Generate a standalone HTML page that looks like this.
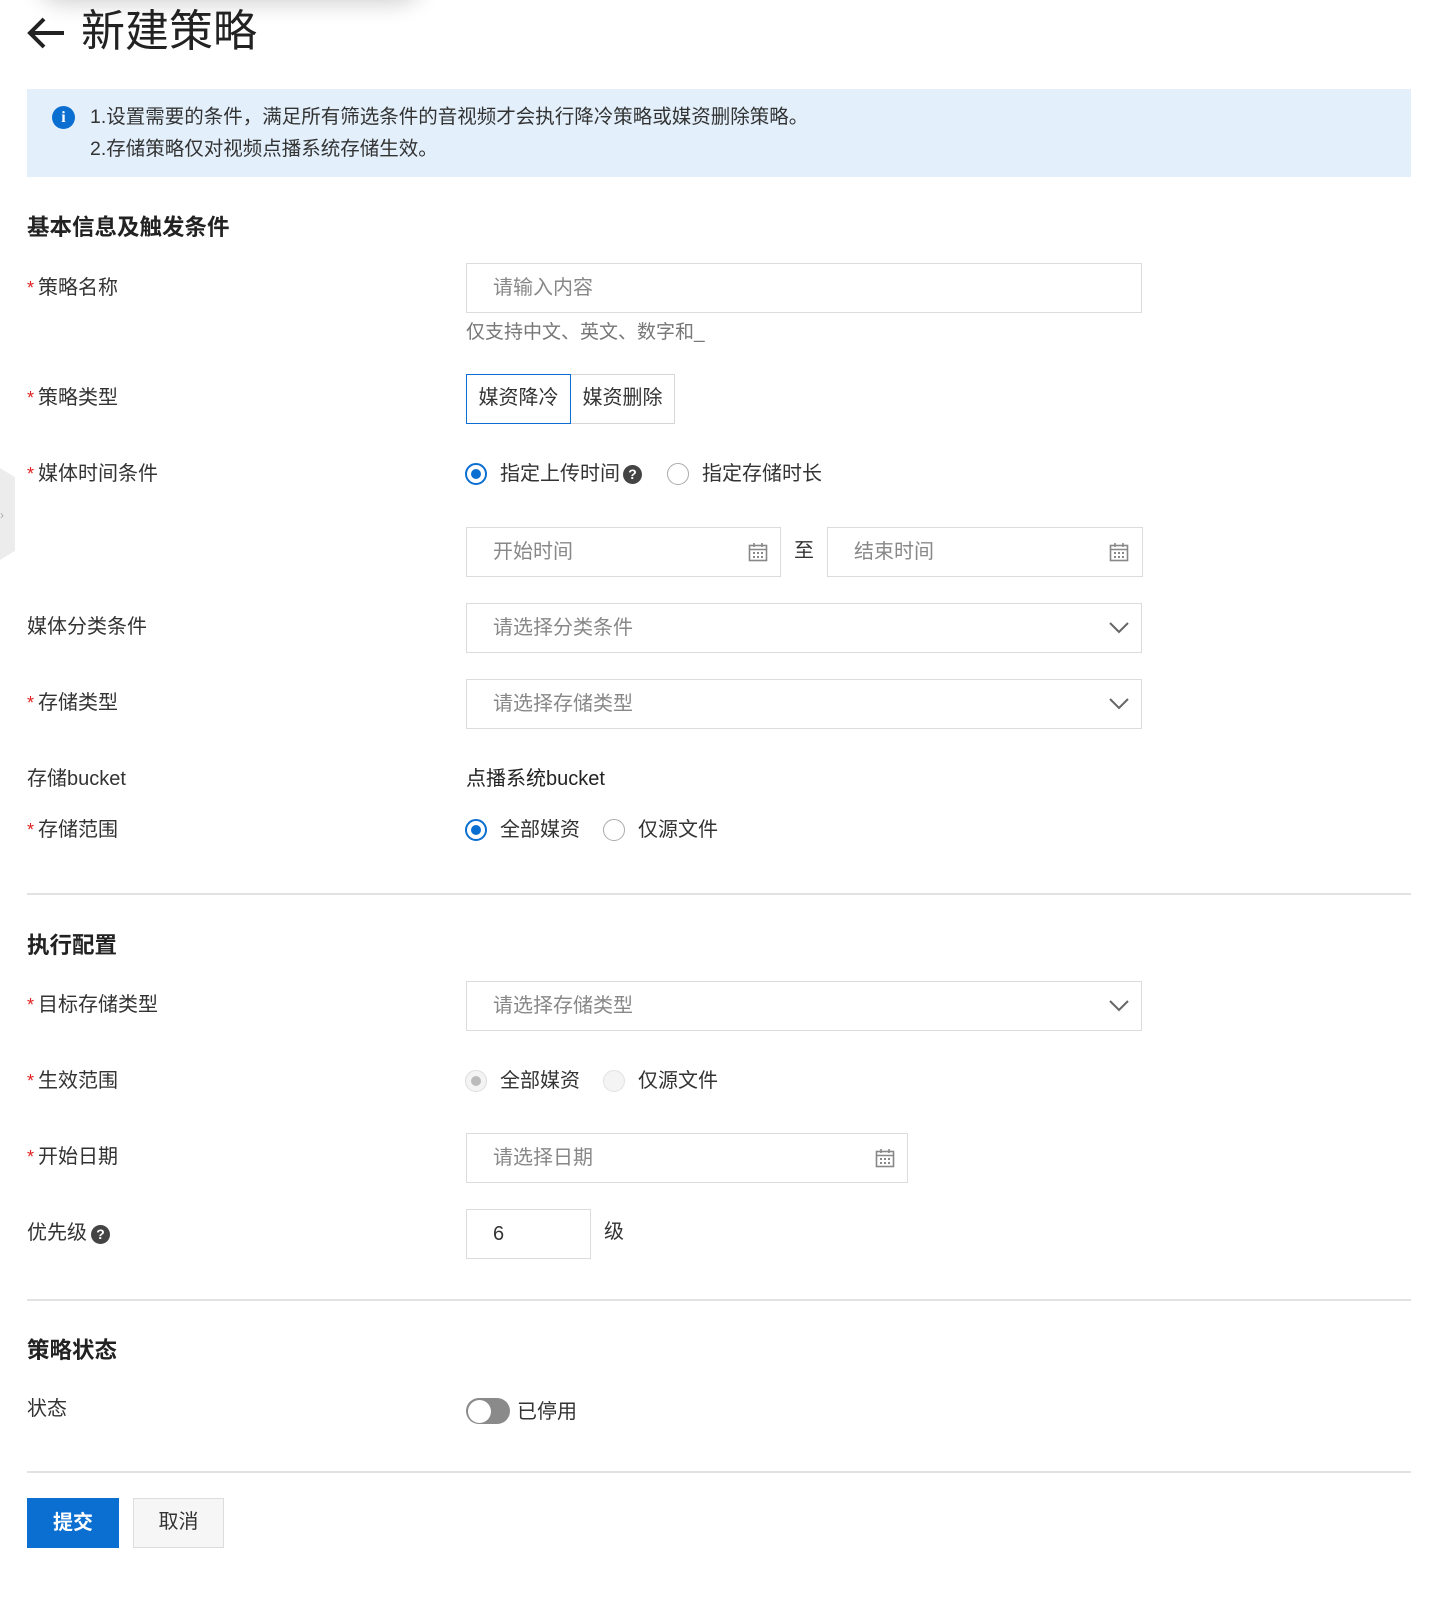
<!DOCTYPE html>
<html><head><meta charset="utf-8">
<style>
*{margin:0;padding:0;box-sizing:border-box}
html,body{width:1452px;height:1614px;background:#fff;overflow:hidden}
body{position:relative;font-family:"Liberation Sans","Noto Sans CJK SC",sans-serif;color:#333}
.a{position:absolute;white-space:nowrap}
.lbl{font-size:20px;color:#333;line-height:24px}
.star{color:#e02020;margin-right:4px;font-size:18px}
.sec{font-size:22.5px;font-weight:bold;color:#222;line-height:26px}
.inp{position:absolute;border:1.5px solid #dcdcdc;background:#fff;height:50px}
.ph{position:absolute;left:26px;top:12px;font-size:20px;color:#888;line-height:24px}
.hr{position:absolute;left:27px;width:1384px;height:2px;background:#e2e2e2}
.rad{position:absolute;width:22px;height:22px;border-radius:50%;border:1.5px solid #aaa;background:#fff}
.rad.on{border:2px solid #0a6fd1}
.rad.on:after{content:"";position:absolute;left:4px;top:4px;width:10px;height:10px;border-radius:50%;background:#0a6fd1}
.q{position:absolute;width:19px;height:19px;border-radius:50%;background:#444;color:#fff;font-size:14px;font-weight:bold;text-align:center;line-height:19px}
</style></head><body>
<div class="a" style="left:40px;top:-50px;width:380px;height:50px;border-radius:30px;background:#fff;box-shadow:0 0 22px 4px rgba(0,0,0,0.18)"></div>
<svg class="a" style="left:26px;top:16px" width="40" height="34" viewBox="0 0 40 34"><path d="M38 17H5M18 3L4 17l14 14" fill="none" stroke="#222" stroke-width="4"/></svg>
<div class="a" style="left:81px;top:4px;font-size:44px;line-height:56px;color:#222">新建策略</div>

<div class="a" style="left:27px;top:89px;width:1384px;height:88px;background:#e3f0fc"></div>
<div class="a" style="left:52px;top:106px;width:23px;height:23px;border-radius:50%;background:#0a6fd1;color:#fff;font-size:16px;font-weight:bold;text-align:center;line-height:23px;font-family:'Liberation Serif',serif">i</div>
<div class="a" style="left:90px;top:105px;font-size:19.5px;line-height:24px;color:#333">1.设置需要的条件，满足所有筛选条件的音视频才会执行降冷策略或媒资删除策略。</div>
<div class="a" style="left:90px;top:137px;font-size:19.5px;line-height:24px;color:#333">2.存储策略仅对视频点播系统存储生效。</div>

<div class="a sec" style="left:27px;top:215px">基本信息及触发条件</div>

<div class="a lbl" style="left:27px;top:276px"><span class="star">*</span>策略名称</div>
<div class="inp" style="left:466px;top:263px;width:676px"><span class="ph">请输入内容</span></div>
<div class="a" style="left:466px;top:321px;font-size:19px;color:#777;line-height:24px">仅支持中文、英文、数字和_</div>

<div class="a lbl" style="left:27px;top:386px"><span class="star">*</span>策略类型</div>
<div class="a" style="left:571px;top:374px;width:104px;height:50px;border:1.5px solid #d6d6d6;border-left:none;font-size:20px;line-height:47px;text-align:center">媒资删除</div>
<div class="a" style="left:466px;top:374px;width:105px;height:50px;border:1.5px solid #0a6fd1;font-size:20px;line-height:47px;text-align:center">媒资降冷</div>

<div class="a" style="left:0;top:468px;width:15px;height:92px;background:#ececec;clip-path:polygon(0 0,100% 10%,100% 90%,0 100%)"></div>
<div class="a" style="left:0;top:508px;color:#aaa;font-size:12px">›</div>

<div class="a lbl" style="left:27px;top:462px"><span class="star">*</span>媒体时间条件</div>
<div class="rad on" style="left:465px;top:463px"></div>
<div class="a lbl" style="left:500px;top:462px">指定上传时间</div>
<div class="q" style="left:623px;top:465px">?</div>
<div class="rad" style="left:667px;top:463px"></div>
<div class="a lbl" style="left:702px;top:462px">指定存储时长</div>

<svg width="0" height="0" style="position:absolute"><defs><symbol id="cal" viewBox="0 0 20 20"><rect x="1.5" y="3.5" width="17" height="15" fill="none" stroke="#888" stroke-width="1.6"/><path d="M1.5 7.5h17M6 1v4M14 1v4" stroke="#888" stroke-width="1.6"/><path d="M5 10h2v2H5zM9 10h2v2H9zM13 10h2v2h-2zM5 14h2v2H5zM9 14h2v2H9zM13 14h2v2h-2z" fill="#888"/></symbol>
<symbol id="chev" viewBox="0 0 20 12"><path d="M1 1l9 9 9-9" fill="none" stroke="#666" stroke-width="2"/></symbol></defs></svg>

<div class="inp" style="left:466px;top:527px;width:315px"><span class="ph">开始时间</span><svg style="position:absolute;left:281px;top:14px" width="20" height="20"><use href="#cal"/></svg></div>
<div class="a lbl" style="left:794px;top:539px">至</div>
<div class="inp" style="left:827px;top:527px;width:316px"><span class="ph">结束时间</span><svg style="position:absolute;left:281px;top:14px" width="20" height="20"><use href="#cal"/></svg></div>

<div class="a lbl" style="left:27px;top:615px">媒体分类条件</div>
<div class="inp" style="left:466px;top:603px;width:676px"><span class="ph">请选择分类条件</span><svg style="position:absolute;left:642px;top:18px" width="20" height="12"><use href="#chev"/></svg></div>

<div class="a lbl" style="left:27px;top:691px"><span class="star">*</span>存储类型</div>
<div class="inp" style="left:466px;top:679px;width:676px"><span class="ph">请选择存储类型</span><svg style="position:absolute;left:642px;top:18px" width="20" height="12"><use href="#chev"/></svg></div>

<div class="a lbl" style="left:27px;top:767px">存储bucket</div>
<div class="a lbl" style="left:466px;top:767px;color:#222">点播系统bucket</div>

<div class="a lbl" style="left:27px;top:818px"><span class="star">*</span>存储范围</div>
<div class="rad on" style="left:465px;top:819px"></div>
<div class="a lbl" style="left:500px;top:818px">全部媒资</div>
<div class="rad" style="left:603px;top:819px"></div>
<div class="a lbl" style="left:638px;top:818px">仅源文件</div>

<div class="hr" style="top:893px"></div>

<div class="a sec" style="left:27px;top:933px">执行配置</div>

<div class="a lbl" style="left:27px;top:993px"><span class="star">*</span>目标存储类型</div>
<div class="inp" style="left:466px;top:981px;width:676px"><span class="ph">请选择存储类型</span><svg style="position:absolute;left:642px;top:18px" width="20" height="12"><use href="#chev"/></svg></div>

<div class="a lbl" style="left:27px;top:1069px"><span class="star">*</span>生效范围</div>
<div class="rad" style="left:465px;top:1070px;border-color:#ddd;background:#f4f4f4"><div style="position:absolute;left:4.5px;top:4.5px;width:10px;height:10px;border-radius:50%;background:#bbb"></div></div>
<div class="a lbl" style="left:500px;top:1069px">全部媒资</div>
<div class="rad" style="left:603px;top:1070px;border-color:#e2e2e2;background:#f4f4f4"></div>
<div class="a lbl" style="left:638px;top:1069px">仅源文件</div>

<div class="a lbl" style="left:27px;top:1145px"><span class="star">*</span>开始日期</div>
<div class="inp" style="left:466px;top:1133px;width:442px"><span class="ph">请选择日期</span><svg style="position:absolute;left:408px;top:14px" width="20" height="20"><use href="#cal"/></svg></div>

<div class="a lbl" style="left:27px;top:1221px">优先级</div>
<div class="q" style="left:91px;top:1225px">?</div>
<div class="inp" style="left:466px;top:1209px;width:125px"><span class="ph" style="color:#333">6</span></div>
<div class="a lbl" style="left:604px;top:1220px">级</div>

<div class="hr" style="top:1299px"></div>

<div class="a sec" style="left:27px;top:1338px">策略状态</div>

<div class="a lbl" style="left:27px;top:1397px">状态</div>
<div class="a" style="left:466px;top:1398px;width:44px;height:26px;border-radius:13px;background:#8a8a8a"><div style="position:absolute;left:1.5px;top:1.5px;width:23px;height:23px;border-radius:50%;background:#fff"></div></div>
<div class="a lbl" style="left:517px;top:1400px">已停用</div>

<div class="hr" style="top:1471px"></div>

<div class="a" style="left:27px;top:1498px;width:92px;height:50px;background:#0a6fd1;color:#fff;font-size:20px;font-weight:bold;text-align:center;line-height:50px">提交</div>
<div class="a" style="left:133px;top:1498px;width:91px;height:50px;background:#f6f6f6;border:1.5px solid #ddd;color:#333;font-size:20px;text-align:center;line-height:47px">取消</div>
</body></html>
